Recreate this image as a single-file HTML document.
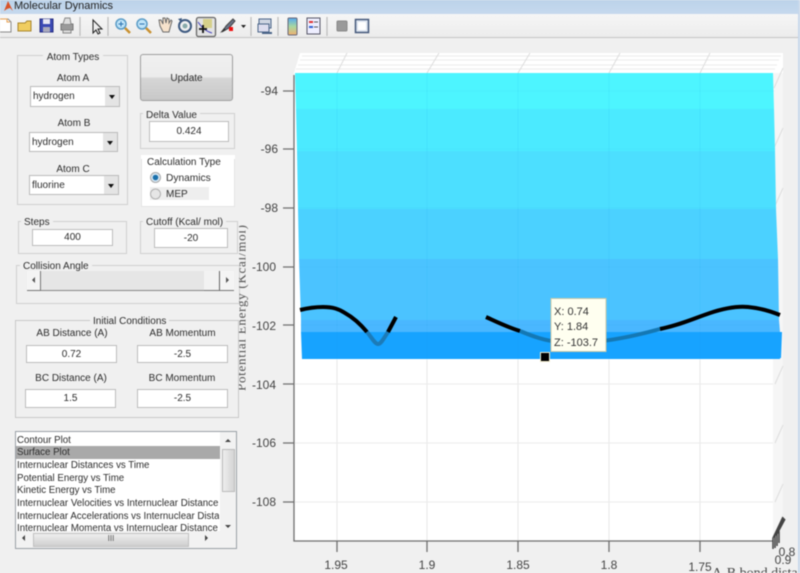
<!DOCTYPE html>
<html><head><meta charset="utf-8">
<style>
html,body{margin:0;padding:0;background:#f0f0f0;overflow:hidden}
#r{position:relative;width:800px;height:573px;overflow:hidden;background:#f0f0f0;font-family:"Liberation Sans",sans-serif;font-size:10px;color:#2c2c2c;filter:blur(.6px)}
#r div{position:absolute;box-sizing:border-box}
.g{border:1px solid #d0d0d0}
.l{background:#f0f0f0;padding:0 3px;line-height:12px;white-space:nowrap;text-align:center}
.t{white-space:nowrap;text-align:center;line-height:12px}
.i{background:#fff;border:1px solid #bdbdbd;text-align:center;font-size:10px;color:#2c2c2c;display:flex;align-items:center;justify-content:center}
.d{background:#fff;border:1px solid #bbb;padding-left:2px;line-height:19px;font-size:10px}
.d:after{content:"";position:absolute;right:0;top:0;bottom:0;width:14px;background:#e4e4e4}
.d:before{content:"";position:absolute;z-index:2;right:4px;top:8px;border:3px solid transparent;border-top:4px solid #111;border-bottom:0}
.r{left:0;right:17px;height:13px;line-height:13px;padding-left:1px;white-space:nowrap;overflow:hidden;font-size:9.7px}
</style></head><body>
<div id="r">
<div style="left:0;top:0;width:800px;height:14px;background:linear-gradient(#bcd3ea,#c6d9ee)"></div>
<svg style="position:absolute;left:2px;top:0" width="12" height="13"><path d="M2 11L6 1 8 5 11 11 8 8 5 9Z" fill="#d8542a"/></svg>
<div style="left:14px;top:0;font-size:11px;line-height:12px;color:#222">Molecular Dynamics</div>
<div style="left:0;top:14px;width:800px;height:24px;background:linear-gradient(#f6f6f6,#ececec);border-bottom:1px solid #c4c4c4"></div>

<svg style="position:absolute;left:0;top:14px" width="400" height="24" fill="none">
<path d="M-2 5H8L11 8V18H-2Z" fill="#fff" stroke="#888"/><path d="M0 5H7V8H10" stroke="#e8a050"/>
<path d="M18 9H25L27 7H31V17H18Z" fill="#f0cd60" stroke="#a8862e"/>
<rect x="40" y="5" width="13" height="13" fill="#3b49b4" stroke="#262d80"/><rect x="43" y="5" width="7" height="5" fill="#e8e8f4"/><rect x="43" y="13" width="7" height="5" fill="#aab"/>
<rect x="61" y="10" width="12" height="6" fill="#9a9a9a" stroke="#777"/><path d="M63 10L65 4H70L71 10M63 16H71V19H63Z" fill="#ddd" stroke="#888"/>
<path d="M80 3V22M108 3V22M251 3V22M278 3V22M327 3V22" stroke="#bbb" stroke-width="1.2"/>
<path d="M93 6V19L96 16 98 20 100 19 98 15H102Z" fill="#eee" stroke="#222"/>
<circle cx="121" cy="10" r="5" fill="#bfe4f8" stroke="#5a9bc6" stroke-width="1.5"/><path d="M125 14L130 19" stroke="#c89030" stroke-width="2.5"/><path d="M118.500 10H123.500M121 7.500V12.500" stroke="#2870b0"/>
<circle cx="142" cy="10" r="5" fill="#bfe4f8" stroke="#5a9bc6" stroke-width="1.5"/><path d="M146 14L151 19" stroke="#c89030" stroke-width="2.500"/><path d="M139.500 10H144.500" stroke="#2870b0"/>
<path d="M160 12L159 6 161 6 163 10 163 4 165 4 166 9 167 4 169 5 169 9 171 6 172 7 170 14 169 18H163Z" fill="#f6e2cc" stroke="#6a6a6a"/>
<circle cx="185" cy="12" r="6" fill="none" stroke="#3e5a80" stroke-width="2"/><circle cx="185" cy="12" r="2.500" fill="#8aa"/><path d="M178 5L182 4 181 8" fill="#3e5a80"/>
<rect x="196.500" y="3.500" width="19" height="19" rx="2" fill="#e3e3e3" stroke="#666" stroke-width="1.300"/><rect x="203" y="5" width="9" height="9" fill="#d6d08a"/><path d="M198 8Q204 17 212 19" stroke="#4a48c0"/><path d="M199 15H207M203 11V19" stroke="#111" stroke-width="1.800"/>
<path d="M222 18L226 12 233 5 235 7 229 14Z" fill="#6a7488" stroke="#444"/><rect x="229" y="13" width="4" height="4" fill="#ee1010"/><path d="M220 19L226 16 224 14Z" fill="#333"/>
<path d="M241 11H246L243.500 14Z" fill="#222"/>
<rect x="259" y="5" width="12" height="9" fill="#cfd6e2" stroke="#4a6488"/><rect x="258" y="10" width="11" height="8" fill="#dde" stroke="#4a6488"/><path d="M262 19H272" stroke="#4a6488" stroke-width="2"/>
<rect x="288" y="4" width="9" height="17" rx="1" fill="url(#c)" stroke="#667"/>
<defs><linearGradient id="c" x1="0" y1="0" x2="0" y2="1"><stop offset="0" stop-color="#55a8f0"/><stop offset=".5" stop-color="#a8d8a0"/><stop offset="1" stop-color="#f0b070"/></linearGradient></defs>
<rect x="307" y="4" width="13" height="16" fill="#eef" stroke="#556"/><rect x="309" y="7" width="4" height="2" fill="#e03030"/><rect x="309" y="12" width="4" height="2" fill="#3060d0"/><path d="M314 8H318M314 13H318" stroke="#555"/>
<rect x="337" y="7" width="10" height="10" rx="1" fill="#9a9a9a" stroke="#888"/>
<rect x="355.500" y="5.500" width="13" height="13" fill="#dce4ee" stroke="#44587a" stroke-width="1.500"/><rect x="358" y="8" width="8" height="8" fill="#fff"/>
</svg>

<!-- Atom types -->
<div class="g" style="left:17px;top:55px;width:111px;height:150px"></div>
<div class="l" style="left:43px;top:52px;width:60px">Atom Types</div>
<div class="t" style="left:40px;top:73px;width:66px">Atom A</div>
<div class="d" style="left:30px;top:86px;width:90px;height:21px;line-height:20px">hydrogen</div>
<div class="t" style="left:41px;top:118px;width:66px">Atom B</div>
<div class="d" style="left:29px;top:132px;width:89px;height:20px">hydrogen</div>
<div class="t" style="left:40px;top:164px;width:66px">Atom C</div>
<div class="d" style="left:29px;top:175px;width:90px;height:20px">fluorine</div>

<div style="left:140px;top:54px;width:93px;height:47px;border:1px solid #9e9e9e;border-radius:3px;background:linear-gradient(#f0f0f0 0,#ececec 48%,#d6d6d6 52%,#c8c8c8 100%);text-align:center;line-height:47px;font-size:10px">Update</div>

<div class="g" style="left:140px;top:113px;width:95px;height:36px"></div>
<div class="l" style="left:143px;top:110px">Delta Value</div>
<div class="i" style="left:149px;top:121px;width:80px;height:21px">0.424</div>

<div class="g" style="left:141px;top:157px;width:94px;height:50px;background:#fff;border-color:#e4e4e4"></div>
<div style="left:141px;top:155px;width:94px;height:4px;background:#fff"></div>
<div class="l" style="left:144px;top:157px;background:#fff;padding:0 3px">Calculation Type</div>
<div style="left:150px;top:187px;width:59px;height:13px;background:#eee"></div>
<svg style="position:absolute;left:149px;top:171px" width="14" height="32"><circle cx="6.500" cy="6.500" r="5" fill="#d6e6f2" stroke="#aaa"/><circle cx="6.500" cy="6.500" r="2.800" fill="#1a70ac"/><circle cx="6.500" cy="23" r="5" fill="#e6e6e6" stroke="#b0b0b0"/></svg>
<div class="t" style="left:166px;top:173px;font-size:10.200px">Dynamics</div>
<div class="t" style="left:166px;top:189px;font-size:10px">MEP</div>

<div class="g" style="left:18px;top:221px;width:109px;height:33px"></div>
<div class="l" style="left:21px;top:217px">Steps</div>
<div class="i" style="left:32px;top:229px;width:81px;height:17px">400</div>

<div class="g" style="left:140px;top:221px;width:98px;height:33px"></div>
<div class="l" style="left:143px;top:217px">Cutoff (Kcal/ mol)</div>
<div class="i" style="left:154px;top:228px;width:74px;height:20px">-20</div>

<div class="g" style="left:16px;top:265px;width:224px;height:39px"></div>
<div class="l" style="left:20px;top:261px">Collision Angle</div>
<div style="left:27px;top:271px;width:207px;height:20px;background:#e6e6e6;border-bottom:1px solid #888"></div>
<div style="left:27px;top:271px;width:14px;height:20px;background:#f4f4f4;border-right:1px solid #777;border-bottom:1px solid #777"></div>
<div style="left:32px;top:277px;border:3px solid transparent;border-right:3px solid #555;border-left:0"></div>
<div style="left:204px;top:271px;width:16px;height:20px;background:#f2f2f2;border-right:1px solid #666;border-bottom:1px solid #777"></div>
<div style="left:220px;top:271px;width:14px;height:20px;background:#f4f4f4;border-bottom:1px solid #777"></div>
<div style="left:226px;top:277px;border:3px solid transparent;border-left:3px solid #555;border-right:0"></div>

<div class="g" style="left:15px;top:320px;width:224px;height:98px;border-color:#c8c8c8"></div>
<div class="l" style="left:90px;top:316px">Initial Conditions</div>
<div class="t" style="left:30px;top:328px;width:84px">AB Distance (A)</div>
<div class="t" style="left:145px;top:328px;width:75px">AB Momentum</div>
<div class="i" style="left:26px;top:345px;width:91px;height:18px">0.72</div>
<div class="i" style="left:137px;top:345px;width:91px;height:18px">-2.5</div>
<div class="t" style="left:28px;top:373px;width:86px">BC Distance (A)</div>
<div class="t" style="left:143px;top:373px;width:78px">BC Momentum</div>
<div class="i" style="left:25px;top:389px;width:91px;height:19px">1.5</div>
<div class="i" style="left:137px;top:389px;width:91px;height:19px">-2.5</div>

<!-- list -->
<div style="left:15px;top:431px;width:222px;height:118px;background:#fff;border:1px solid #9aa0a6;overflow:hidden">
<div class="r" style="top:2px">Contour Plot</div>
<div class="r" style="top:14px;height:13px;background:#a9a9a9;right:16px">Surface Plot</div>
<div class="r" style="top:27px">Internuclear Distances vs Time</div>
<div class="r" style="top:40px">Potential Energy vs Time</div>
<div class="r" style="top:52px">Kinetic Energy vs Time</div>
<div class="r" style="top:65px">Internuclear Velocities vs Internuclear Distance</div>
<div class="r" style="top:78px">Internuclear Accelerations vs Internuclear Distance</div>
<div class="r" style="top:90px">Internuclear Momenta vs Internuclear Distance</div>
<div style="right:0;top:0;width:16px;bottom:17px;background:#f2f2f2"></div>
<div style="right:1px;top:17px;width:13px;height:43px;background:linear-gradient(90deg,#eee,#d4d4d4);border:1px solid #bbb"></div>
<div style="right:5px;top:7px;border:3px solid transparent;border-bottom:3px solid #444;border-top:0"></div>
<div style="right:5px;top:93px;border:3px solid transparent;border-top:3px solid #444;border-bottom:0"></div>
<div style="left:0;right:0;bottom:0;height:17px;background:#f2f2f2"></div>
<div style="left:17px;bottom:1px;width:156px;height:14px;background:linear-gradient(#eee,#cfcfcf);border:1px solid #c0c0c0;text-align:center;line-height:9px;font-size:8px;color:#555">III</div>
<div style="left:6px;bottom:7px;border:3px solid transparent;border-right:3px solid #444;border-left:0"></div>
<div style="right:28px;bottom:7px;border:3px solid transparent;border-left:3px solid #444;border-right:0"></div>
</div>

<!-- plot -->
<svg style="position:absolute;left:0;top:0" width="800" height="573">
<defs><clipPath id="lab"><rect x="239" y="200" width="20" height="200"/></clipPath></defs>
<rect x="294" y="72" width="480" height="469" fill="#fff"/>
<path d="M773 53H783V512L773 541Z" fill="#f6f6f6"/>
<path d="M300 53H783V73H294Z" fill="#fff"/>
<path d="M302 56H781M300 60H779M298 65H777M296 69H775" stroke="#eaeaea"/>
<path d="M347 53L337 73M439 53L427 73M530 53L518 73M620 53L609 73M710 53L700 73M783 68L774 88M783 128L774 148M783 188L774 208M783 366L775 384M783 425L775 443M783 484L775 502" stroke="#ddd"/>
<path d="M295 502H773M295 443H773M295 384H773" stroke="#ebebeb"/>
<path d="M337 360V541M427 360V541M518 360V541M609 360V541M700 360V541" stroke="#e8e8e8"/>

<path d="M295 73H773L774 109H296Z" fill="#4df5ff"/>
<path d="M296 109H774L775 151H297Z" fill="#4beaff"/>
<path d="M297 151H775L776 209H298Z" fill="#4cdfff"/>
<path d="M298 209H776L778 259H299Z" fill="#4bd1ff"/>
<path d="M299 259H778L779 320H301Z" fill="#4bc3ff"/>
<path d="M301 320H779L780 332H301Z" fill="#4ab7ff"/>
<path d="M301 332H782L781 358 H780V359H302Z" fill="#17a3ff"/>
<path d="M337 73V360M427 73V360M518 73V360M609 73V360M700 73V360" stroke="#1aa0e0" stroke-opacity=".1"/>
<path d="M296 91H775M297 149H776M298 208H777M299 267H778M300 325H780" stroke="#1aa0e0" stroke-opacity=".06"/>

<g fill="none" stroke-linecap="butt">
<path d="M300 310C308 308 316 307 323 307C333 307 339 309 345 313C354 318 362 326 367 332" stroke="#000" stroke-width="4"/>
<path d="M367 332C372 338 375 344 378 344C381 344 384 338 388 332" stroke="#1c7bb8" stroke-width="4"/>
<path d="M388 332L396 317" stroke="#000" stroke-width="4"/>
<path d="M486 317C497 322 507 327 520 331" stroke="#000" stroke-width="4"/>
<path d="M520 331C532 336 545 341 560 342C580 344 610 343 660 329" stroke="#1478b4" stroke-width="4"/>
<path d="M660 329C680 325 695 318 710 313C725 308 737 306 748 307C760 308 770 311 780 315" stroke="#000" stroke-width="4"/>
</g>

<g stroke="#6e6e6e" stroke-width="1.300" fill="none">
<path d="M294 75V541H773"/>
<path d="M283 91H294M283 149H294M283 208H294M283 267H294M283 325H294M283 384H294M283 443H294M283 502H294"/>
<path d="M337 541V552M427 541V552M518 541V552M609 541V552M700 541V552"/>
</g>
<path d="M773 549V538L783 517M775 548V536L784 518M777 546V534L785 519M779 543V531" stroke="#444" stroke-width="1.500" fill="none"/>
<g font-family="Liberation Sans" font-size="12" fill="#444" text-anchor="end">
<text x="278" y="95">-94</text><text x="278" y="153">-96</text><text x="278" y="212">-98</text><text x="276" y="271">-100</text><text x="276" y="330">-102</text><text x="276" y="389">-104</text><text x="276" y="447">-106</text><text x="276" y="506">-108</text>
</g>
<g font-family="Liberation Sans" font-size="12" fill="#444" text-anchor="middle">
<text x="336" y="569">1.95</text><text x="427" y="569">1.9</text><text x="518" y="569">1.85</text><text x="609" y="569">1.8</text><text x="700" y="571">1.75</text>
<text x="787" y="556">0.8</text><text x="783" y="564">0.9</text>
</g>
<text x="712" y="577" font-family="Liberation Serif" font-size="14" fill="#444">A-B bond dista</text>
<g clip-path="url(#lab)"><text transform="translate(245.500,391) rotate(-90)" font-family="Liberation Serif" font-size="13" fill="#555" textLength="166">Potential Energy  (Kcal/mol)</text></g>

<rect x="540.500" y="352.500" width="9" height="9" fill="#000" stroke="#eee8c8"/>
<rect x="551" y="298.500" width="55" height="53" fill="#fffff0" stroke="#c8c8a8"/>
<g font-family="Liberation Sans" font-size="11" fill="#333"><text x="554" y="315">X: 0.74</text><text x="554" y="330">Y: 1.84</text><text x="554" y="346">Z: -103.7</text></g>
<rect x="798" y="0" width="2" height="573" fill="#c8d8ec"/>
</svg>
</div>
</body></html>
